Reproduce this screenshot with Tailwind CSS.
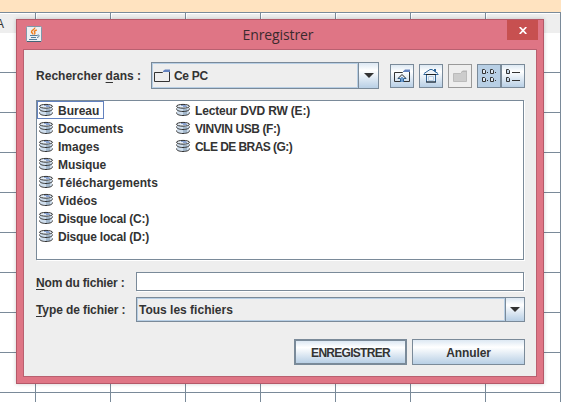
<!DOCTYPE html>
<html lang="fr">
<head>
<meta charset="utf-8">
<title>Enregistrer</title>
<script src="https://cdn.jsdelivr.net/npm/@tailwindcss/browser@4"></script>
</head>
<body class="relative h-[402px] w-[561px] overflow-hidden bg-white font-['Liberation_Sans',Arial,sans-serif] text-[12px] font-bold text-[#333]">
<svg class="hidden">
  <defs>
    <linearGradient id="metal" x1="0" y1="0" x2="0" y2="1"><stop offset="0" stop-color="#fff"/><stop offset="1" stop-color="#b8cfe5"/></linearGradient>
    <symbol id="disk" viewBox="0 0 16 16">
      <path d="M2 4.500v7c0 1 2.500 2 6 2s6-1 6-2v-7z" fill="#cfdeed"/>
      <path d="M8 7h4v6H8z" fill="#a3b8cc"/>
      <ellipse cx="8" cy="4.300" rx="6.500" ry="1.900" fill="#e4edf6" stroke="#333"/>
      <path d="M6 3h5v1h1v1H8V4H6z" fill="#6382bf" opacity=".7"/>
      <path d="M1.500 6.500c-.3 1.800 2.700 3 6.500 3s6.800-1.200 6.500-3M1.500 10.500c-.3 1.800 2.700 3 6.500 3s6.800-1.200 6.500-3" fill="none" stroke="#333"/>
    </symbol>
  </defs>
</svg>

<!-- spreadsheet -->
<div class="h-3 bg-[#ffe3c0]"></div>
<div class="grid h-[21px] grid-cols-[36px_repeat(7,75px)] border-y border-[#7a8a99]">
  <div class="border-r border-[#7a8a99] bg-[#eee] pt-0.5 shadow-[inset_0_1px_#fff]"><span class="-ml-1 font-normal">A</span></div>
  <div class="border-r border-[#7a8a99] bg-[#eee] shadow-[inset_1px_1px_#fff]"></div>
  <div class="border-r border-[#7a8a99] bg-[#eee] shadow-[inset_1px_1px_#fff]"></div>
  <div class="border-r border-[#7a8a99] bg-[#eee] shadow-[inset_1px_1px_#fff]"></div>
  <div class="border-r border-[#7a8a99] bg-[#eee] shadow-[inset_1px_1px_#fff]"></div>
  <div class="border-r border-[#7a8a99] bg-[#eee] shadow-[inset_1px_1px_#fff]"></div>
  <div class="border-r border-[#7a8a99] bg-[#eee] shadow-[inset_1px_1px_#fff]"></div>
  <div class="border-r border-[#7a8a99] bg-[#eee] shadow-[inset_1px_1px_#fff]"></div>
</div>
<div id="cells" class="grid h-[369px] auto-rows-[40px] grid-cols-[36px_repeat(7,75px)] overflow-hidden"></div>
<script>
  document.getElementById('cells').innerHTML = '<div class="border-r border-b border-[#7a8a99]"></div>'.repeat(80);
</script>

<!-- dialog window -->
<section class="absolute left-4 top-[19px] flex h-[365px] w-[528px] flex-col border border-[#b45868] bg-[#df7585] px-1.5 pb-1.5 shadow-[0_0_4px_rgba(0,0,0,.2)]">
  <header class="relative flex h-[29px] shrink-0 justify-center">
    <svg class="absolute left-[3px] top-[6px]" width="16" height="16" viewBox="0 0 16 16">
      <rect x=".5" y=".5" width="15" height="15" rx="1" fill="#edf1f4" stroke="#7f98aa"/>
      <path d="M1 15.500h14" stroke="#446477"/>
      <path d="M8.800 1.500C9.200 3.500 5 4.200 5.500 6c.2 1 1.500 1.200 1.500 2.500M10.800 4C8 4.800 8 5.800 8.800 6.500c.5.700 0 1.300-.5 2" fill="none" stroke="#ee7d1b" stroke-width="1.400"/>
      <path d="M4 9.500h7M5 11.500h5M3 13.500h8M11 9.500c3-1.500 3 1.500 0 2" fill="none" stroke="#58809c"/>
    </svg>
    <h1 class="pt-[5px] pr-1 font-['Open_Sans',sans-serif] text-[14px] leading-5 font-normal tracking-[-0.1px] text-[#3b2a2e]">Enregistrer</h1>
    <button class="absolute -right-px top-0 flex h-5 w-[31px] items-center justify-center bg-[#c75050]"><svg width="8" height="7" viewBox="0 0 8 7"><path d="M.7 0l6.600 7M7.300 0L.7 7" stroke="#fff" stroke-width="1.700"/></svg></button>
  </header>
  <main class="flex flex-1 flex-col border border-[#b96070] bg-[#eee] pt-3 pr-[11px] pl-3">
    <div class="flex h-[27px] items-center">
      <label class="w-[115px] shrink-0 whitespace-nowrap tracking-[0.02px]">Rechercher <u class="underline-offset-2">d</u>ans :</label>
      <div class="flex h-[27px] w-[228px] shrink-0 border border-[#7a8a99]">
        <div class="flex flex-1 items-center border border-[#b8cfe5] pl-px">
          <svg class="mr-1" width="16" height="16" viewBox="0 0 16 16"><path d="M.5 4.500h8l1-1h6v10H.5z" fill="url(#metal)" stroke="#333"/><path d="M9 3l2-1.500h5V4H9z" fill="#6382bf"/></svg>
          <span class="tracking-[-0.3px]">Ce PC</span>
        </div>
        <div class="flex w-5 items-center justify-center border-l border-[#7a8a99] bg-linear-to-b from-[#dde8f3] via-white via-30% to-[#b8cfe5]"><svg width="10" height="5" viewBox="0 0 10 5"><path d="M0 0h10L5 5z" fill="#333"/></svg></div>
      </div>
      <div class="ml-[11px] flex items-center">
        <button class="mr-[5px] grid size-6 place-items-center border border-[#7a8a99] bg-linear-to-b from-[#dde8f3] via-white via-30% to-[#b8cfe5]">
          <svg width="16" height="16" viewBox="0 0 16 16"><path d="M.5 4.500h8l1-1h6v10H.5z" fill="url(#metal)" stroke="#333"/><path d="M9 3.500l2-2h5V4H9z" fill="#6382bf"/><path d="M7 9h2v5H7z" fill="#6d9bcf"/><path d="M6.500 14v-3.500H4M9.500 14v-3.500H12" stroke="#2e659a" fill="none"/><path d="M4 10.500L8 6.500l4 4" stroke="#222" fill="none"/></svg>
        </button>
        <button class="mr-[5px] grid size-6 place-items-center border border-[#7a8a99] bg-linear-to-b from-[#dde8f3] via-white via-30% to-[#b8cfe5]">
          <svg width="16" height="16" viewBox="0 0 16 16"><path d="M11 1h2v4h-2z" fill="#2e659a"/><path d="M1 6.500L6.500 1.500h3L15 6.500z" fill="#edf3f9"/><path d="M.5 6.500h15M1 5.500l3-2 3-2h2l3 2 3 2" fill="none" stroke="#2e659a"/><path d="M3.500 7v7h9V7" fill="#edf3f9" stroke="#336699"/><path d="M3 6.500h10M3 14h10" stroke="#222"/><path d="M5.500 8.500h5v4h-5z" fill="url(#metal)" stroke="#b8cfe5"/></svg>
        </button>
        <button class="mr-[5px] grid size-6 place-items-center border border-[#999]">
          <svg width="16" height="16" viewBox="0 0 16 16"><path d="M1.500 5.500h7l2-2h4v10h-13z" fill="#ccc" stroke="#bbb"/><path d="M9 4l2-1.500h4V4z" fill="#b6b6b6"/></svg>
        </button>
        <button class="grid size-6 place-items-center border border-[#7a8a99] bg-[#b8cfe5]">
          <svg width="16" height="16" viewBox="0 0 16 16" fill="#dfeaf4" stroke="#333"><path d="M1.500 1.500h2l1 1v3h-3zM9.500 1.500h2l1 1v3h-3zM1.500 9.500h2l1 1v3h-3zM9.500 9.500h2l1 1v3h-3z"/><path d="M6 4.500h1M14 4.500h1M6 12.500h1M14 12.500h1"/></svg>
        </button>
        <button class="grid size-6 place-items-center border border-[#7a8a99] bg-linear-to-b from-[#dde8f3] via-white via-30% to-[#b8cfe5]">
          <svg width="16" height="16" viewBox="0 0 16 16" fill="#c8d9ea" stroke="#333"><path d="M1.500 1.500h2l1 1v3h-3zM1.500 9.500h2l1 1v3h-3zM7 4.500h8M7 12.500h8"/></svg>
        </button>
      </div>
    </div>

    <div class="mt-[11px] mb-px flex h-[160px] w-[488px] shrink-0 border border-[#7a8a99] bg-white shadow-[1px_1px_#fff]">
      <ul class="w-[137px] whitespace-nowrap">
        <li class="flex h-[18px] w-[67px] items-center gap-1 border border-[#6382bf]"><svg class="size-4"><use href="#disk"/></svg><span class="pt-0.5">Bureau</span></li>
        <li class="flex h-[18px] items-center gap-1 pl-px"><svg class="size-4"><use href="#disk"/></svg><span class="pt-0.5">Documents</span></li>
        <li class="flex h-[18px] items-center gap-1 pl-px"><svg class="size-4"><use href="#disk"/></svg><span class="pt-0.5">Images</span></li>
        <li class="flex h-[18px] items-center gap-1 pl-px"><svg class="size-4"><use href="#disk"/></svg><span class="pt-0.5 tracking-[-0.1px]">Musique</span></li>
        <li class="flex h-[18px] items-center gap-1 pl-px"><svg class="size-4"><use href="#disk"/></svg><span class="pt-0.5 tracking-[0.08px]">Téléchargements</span></li>
        <li class="flex h-[18px] items-center gap-1 pl-px"><svg class="size-4"><use href="#disk"/></svg><span class="pt-0.5">Vidéos</span></li>
        <li class="flex h-[18px] items-center gap-1 pl-px"><svg class="size-4"><use href="#disk"/></svg><span class="pt-0.5 tracking-[-0.22px]">Disque local (C:)</span></li>
        <li class="flex h-[18px] items-center gap-1 pl-px"><svg class="size-4"><use href="#disk"/></svg><span class="pt-0.5 tracking-[-0.22px]">Disque local (D:)</span></li>
      </ul>
      <ul class="whitespace-nowrap">
        <li class="flex h-[18px] items-center gap-1 pl-px"><svg class="size-4"><use href="#disk"/></svg><span class="pt-0.5 tracking-[-0.18px]">Lecteur DVD RW (E:)</span></li>
        <li class="flex h-[18px] items-center gap-1 pl-px"><svg class="size-4"><use href="#disk"/></svg><span class="pt-0.5 tracking-[-0.42px]">VINVIN USB (F:)</span></li>
        <li class="flex h-[18px] items-center gap-1 pl-px"><svg class="size-4"><use href="#disk"/></svg><span class="pt-0.5 tracking-[-0.55px]">CLE DE BRAS (G:)</span></li>
      </ul>
    </div>

    <div class="mt-[11px] flex h-5 items-center">
      <label class="w-[100px] shrink-0 pt-0.5 whitespace-nowrap tracking-[-0.18px]"><u class="underline-offset-2">N</u>om du fichier :</label>
      <div class="mb-px h-[19px] w-[388px] border border-[#7a8a99] bg-white shadow-[1px_1px_#fff]"></div>
    </div>
    <div class="mt-[5px] flex h-[25px] items-center">
      <label class="w-[100px] shrink-0 whitespace-nowrap tracking-[-0.1px]"><u class="underline-offset-2">T</u>ype de fichier :</label>
      <div class="flex h-[25px] w-[389px] border border-[#7a8a99]">
        <div class="flex flex-1 items-center border border-[#b8cfe5] pl-px"><span>Tous les fichiers</span></div>
        <div class="flex w-[19px] items-center justify-center border-l border-[#7a8a99] bg-linear-to-b from-[#dde8f3] via-white via-30% to-[#b8cfe5]"><svg width="10" height="5" viewBox="0 0 10 5"><path d="M0 0h10L5 5z" fill="#333"/></svg></div>
      </div>
    </div>
    <div class="mt-[17px] ml-[258px] flex gap-[5px]">
      <button class="h-[26px] w-[113px] border-2 border-[#7a8a99] bg-linear-to-b from-[#dde8f3] via-white via-30% to-[#b8cfe5] pt-px tracking-[-0.72px]">ENREGISTRER</button>
      <button class="h-[26px] w-[113px] border border-[#7a8a99] bg-linear-to-b from-[#dde8f3] via-white via-30% to-[#b8cfe5] pt-px tracking-[-0.1px]">Annuler</button>
    </div>
  </main>
</section>
</body>
</html>
